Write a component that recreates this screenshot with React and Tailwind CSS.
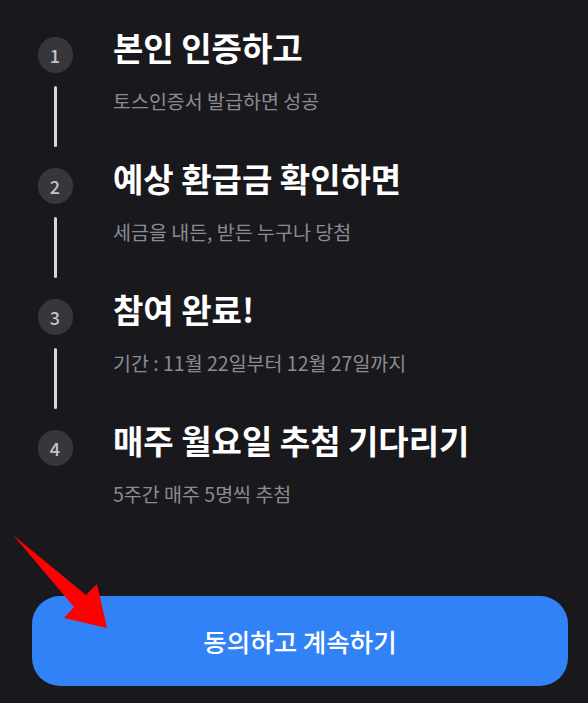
import React from 'react';

const steps = [
    { n: 1, title: '본인 인증하고', desc: '토스인증서 발급하면 성공' },
    { n: 2, title: '예상 환급금 확인하면', desc: '세금을 내든, 받든 누구나 당첨' },
    { n: 3, title: '참여 완료!', desc: '기간 : 11월 22일부터 12월 27일까지' },
    { n: 4, title: '매주 월요일 추첨 기다리기', desc: '5주간 매주 5명씩 추첨' },
];

const font = { fontFamily: '"Noto Sans CJK KR", "Noto Sans", sans-serif' };

const App = () => {
    return (
        <div className="relative w-[588px] h-[703px] bg-[#19191d] overflow-hidden" style={font}>
            {/* Steps */}
            <div className="flex flex-col pt-[27px]">
                {steps.map((s, i) => (
                    <div key={s.n} className="flex h-[131px]">
                        <div className="ml-[38px] w-[34px] pt-[10px] flex flex-col items-center">
                            <div className="w-[35px] h-[36px] rounded-full bg-[#36363b] flex items-center justify-center text-[18px] font-medium text-[#c4c4c9] leading-none">
                                {s.n}
                            </div>
                            {i < steps.length - 1 && (
                                <div className="mt-[13px] w-[3px] h-[61px] rounded-full bg-[#d6d6db]"></div>
                            )}
                        </div>
                        <div className="ml-[41px] flex flex-col">
                            <h2 className="text-[33px] leading-[40px] font-bold text-white">{s.title}</h2>
                            <p className="mt-[21px] text-[19.5px] leading-[26px] text-[#8b8b92]">{s.desc}</p>
                        </div>
                    </div>
                ))}
            </div>

            {/* Bottom button */}
            <div className="absolute left-[32px] right-[20px] top-[596px]">
                <button className="w-full h-[90px] rounded-[28px] bg-[#3182f6] text-white text-[25.5px] font-medium">
                    동의하고 계속하기
                </button>
            </div>

            {/* Red arrow annotation */}
            <svg className="absolute left-0 top-0 pointer-events-none" width="588" height="703" viewBox="0 0 588 703">
                <polygon points="13,535 86,595 97,584 107,628 64,618 74,607" fill="#ff0000" />
            </svg>
        </div>
    );
};

export default App;
